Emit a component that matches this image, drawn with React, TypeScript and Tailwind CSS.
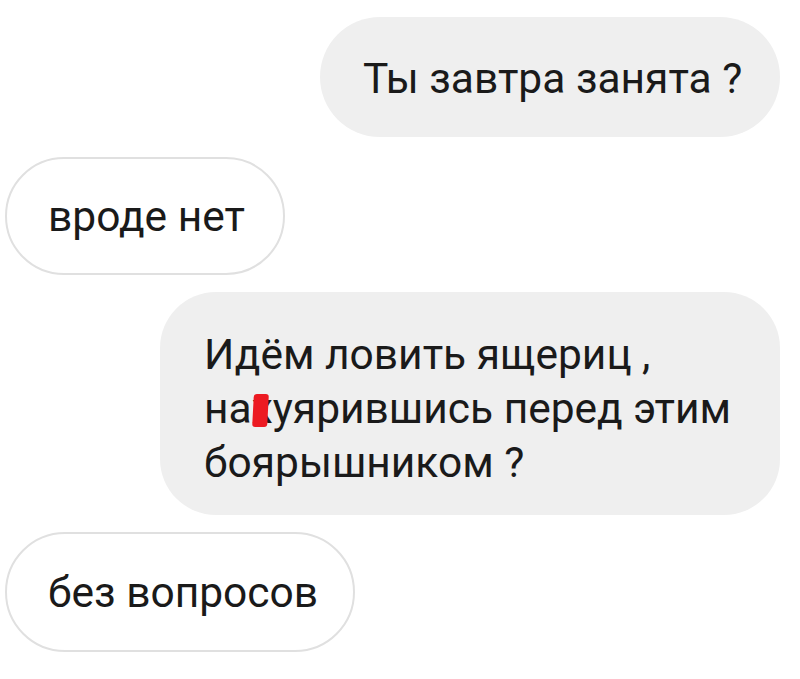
import React from 'react';

const font = { fontFamily: 'Roboto, "Noto Sans", sans-serif' };

const App = () => {
  return (
    <div className="w-[800px] h-[679px] bg-white overflow-hidden text-[#1a1a1a]" style={font}>
      <div className="flex flex-col pt-[17px]">
        {/* outgoing */}
        <div className="self-end mr-[20px] h-[120px] w-[460px] rounded-full bg-[#efefef] flex items-center pl-[43px] pt-[4px]">
          <span className="text-[42.5px] leading-none whitespace-nowrap">Ты завтра занята ?</span>
        </div>

        {/* incoming */}
        <div className="self-start ml-[5px] mt-[20px] h-[118px] w-[280px] rounded-full bg-white border-2 border-[#e0e0e0] flex items-center pl-[41px] pt-[2px]">
          <span className="text-[42.5px] leading-none whitespace-nowrap">вроде нет</span>
        </div>

        {/* outgoing, three lines */}
        <div className="self-end mr-[20px] mt-[17px] h-[223px] w-[620px] rounded-[56px] bg-[#efefef] flex items-center px-[44px] pt-[10px]">
          <p className="text-[42.5px] leading-[54px] whitespace-nowrap">
            Идём ловить ящериц ,<br />
            на
            <span className="relative">
              х
              <span className="absolute left-[1px] top-[10px] w-[15px] h-[33px] bg-[#ec1a22] rounded-[3px] -skew-x-3" />
            </span>
            уярившись перед этим<br />
            боярышником ?
          </p>
        </div>

        {/* incoming */}
        <div className="self-start ml-[5px] mt-[17px] h-[120px] w-[350px] rounded-full bg-white border-2 border-[#e0e0e0] flex items-center pl-[41px] pt-[2px]">
          <span className="text-[42.5px] leading-none whitespace-nowrap">без вопросов</span>
        </div>
      </div>
    </div>
  );
};

export default App;
